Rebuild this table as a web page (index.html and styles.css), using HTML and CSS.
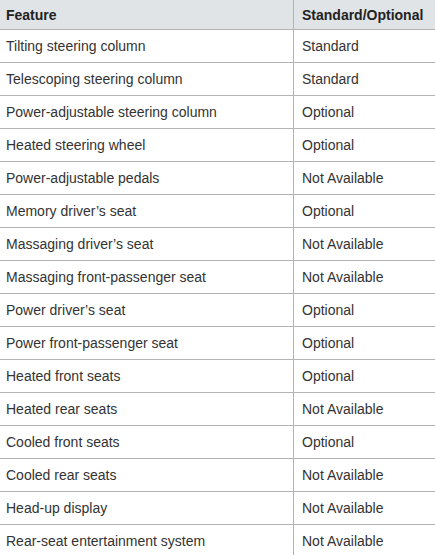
FILE: index.html
```html
<!DOCTYPE html>
<html>
<head>
<meta charset="utf-8">
<link rel="stylesheet" href="styles.css">
</head>
<body>
<table class="spec">
<thead>
<tr><th class="feat">Feature</th><th class="avail">Standard/Optional</th></tr>
</thead>
<tbody>
<tr><td>Tilting steering column</td><td>Standard</td></tr>
<tr><td>Telescoping steering column</td><td>Standard</td></tr>
<tr><td>Power-adjustable steering column</td><td>Optional</td></tr>
<tr><td>Heated steering wheel</td><td>Optional</td></tr>
<tr><td>Power-adjustable pedals</td><td>Not Available</td></tr>
<tr><td>Memory driver’s seat</td><td>Optional</td></tr>
<tr><td>Massaging driver’s seat</td><td>Not Available</td></tr>
<tr><td>Massaging front-passenger seat</td><td>Not Available</td></tr>
<tr><td>Power driver’s seat</td><td>Optional</td></tr>
<tr><td>Power front-passenger seat</td><td>Optional</td></tr>
<tr><td>Heated front seats</td><td>Optional</td></tr>
<tr><td>Heated rear seats</td><td>Not Available</td></tr>
<tr><td>Cooled front seats</td><td>Optional</td></tr>
<tr><td>Cooled rear seats</td><td>Not Available</td></tr>
<tr><td>Head-up display</td><td>Not Available</td></tr>
<tr><td>Rear-seat entertainment system</td><td>Not Available</td></tr>
</tbody>
</table>
</body>
</html>
```
FILE: styles.css
```css
html, body {
  margin: 0;
  padding: 0;
  background: #fff;
}
.spec {
  border-collapse: collapse;
  width: 437px;
  margin-left: -2px;
  font-family: "Liberation Sans", Arial, sans-serif;
  font-size: 14px;
  color: #333;
  table-layout: fixed;
}
.spec th, .spec td {
  padding: 0 8px;
  text-align: left;
  border-bottom: 1px solid #b4b4b4;
  border-right: 1px solid #b4b4b4;
  white-space: nowrap;
  overflow: hidden;
}
.spec th:last-child, .spec td:last-child {
  border-right: none;
}
.spec th {
  height: 29px;
  background: #e1e4e7;
  color: #222;
  font-weight: bold;
}
.spec td {
  height: 32px;
}
.spec .feat {
  width: 279px;
}
.spec .avail {
  width: auto;
}
```
